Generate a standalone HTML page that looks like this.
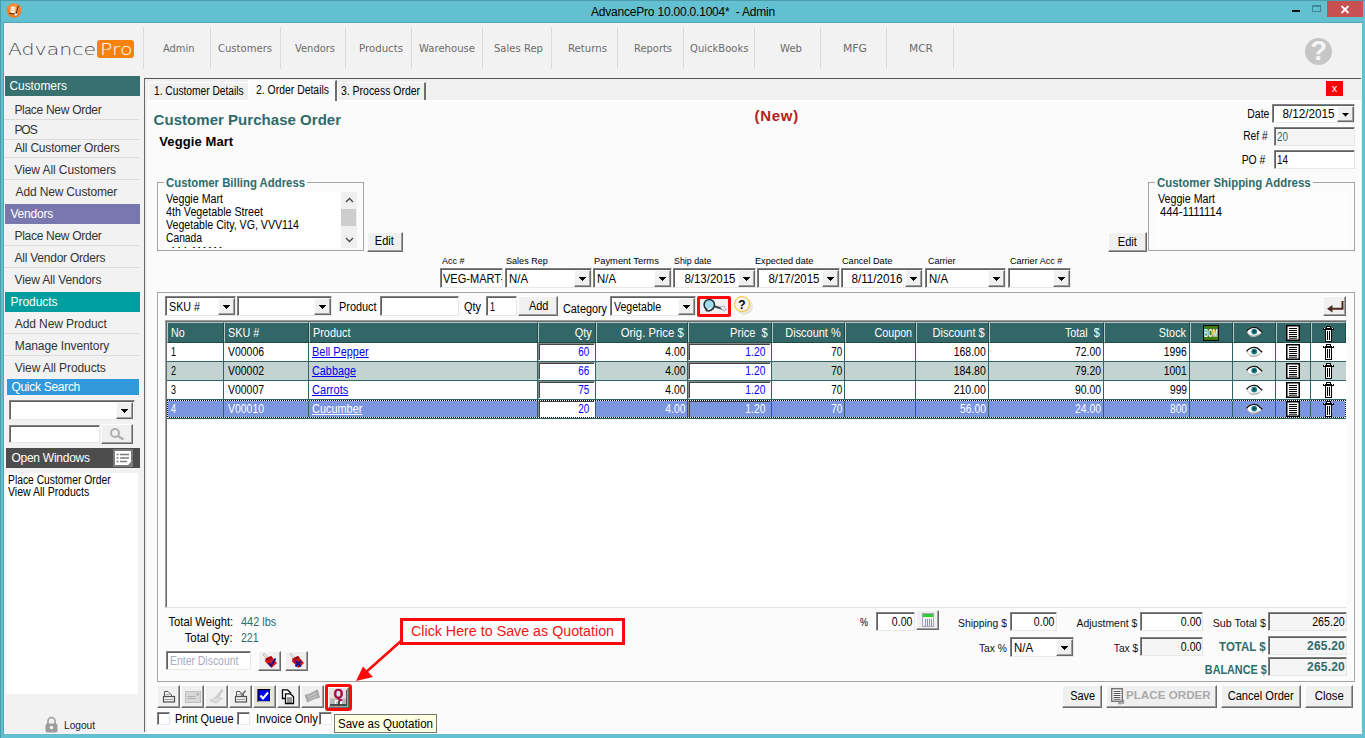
<!DOCTYPE html>
<html>
<head>
<meta charset="utf-8">
<title>AdvancePro</title>
<style>
html,body{margin:0;padding:0;}
body{width:1365px;height:738px;overflow:hidden;background:#62c0d0;font-family:"Liberation Sans",sans-serif;font-size:11px;color:#000;position:relative;}
.a{position:absolute;box-sizing:border-box;white-space:nowrap;}
.t{position:absolute;white-space:nowrap;line-height:1;}
.sunk{border:1px solid;border-color:#828282 #e8e8e8 #e8e8e8 #828282;box-shadow:inset 1px 1px 0 #5f5f5f;background:#fff;}
.dis{background:#f5f5f5;}
.btn{border:1px solid;border-color:#fdfdfd #696969 #696969 #fdfdfd;box-shadow:inset -1px -1px 0 #a0a0a0;background:#f0f0f0;}
.dd:after{content:"";position:absolute;left:50%;top:50%;width:7px;height:4px;margin:-1.5px 0 0 -3.5px;background:#000;clip-path:polygon(0 0,7px 0,7px 1px,6px 1px,6px 2px,5px 2px,5px 3px,4px 3px,4px 4px,3px 4px,3px 3px,2px 3px,2px 2px,1px 2px,1px 1px,0 1px);}
.grp{border:1px solid #a5a5a5;}
.th{background:#336666;border-left:1px solid #b4c8c8;border-top:1px solid #b4c8c8;border-right:1px solid #1f4a4a;border-bottom:1px solid #1f4a4a;}
.hl{background:#2f6464;}
.lnk{text-decoration:underline;}
</style>
</head>
<body>
<div class="a" style="left:0px;top:0px;width:1365px;height:1px;background:#4b9dac"></div>
<div class="a" style="left:0px;top:0px;width:1px;height:738px;background:#4b9dac"></div>
<div class="t" style="left:591.00px;top:6px;font-size:12px;color:#000;letter-spacing:-0.205px;">AdvancePro 10.00.0.1004*&nbsp; - Admin</div>
<svg class="a" style="left:6px;top:3px" width="16" height="16" viewBox="0 0 16 16"><defs><radialGradient id="og" cx="50%" cy="35%" r="65%"><stop offset="0" stop-color="#ff9a48"/><stop offset="1" stop-color="#f9761a"/></radialGradient></defs><circle cx="8.1" cy="7.6" r="7.4" fill="url(#og)"/><path d="M5.2 3.2 L9.6 4 L8.7 10.3 L4.3 9.5 Z" fill="#ffeedd"/><path d="M5 5.3 L9.2 6 M4.7 7.4 L8.9 8.1" stroke="#ffc89a" stroke-width=".6"/><path d="M13.2 2.8 L12 3.6 L10.1 11.2 M3.2 10.2 L10 11.4" stroke="#3a2a22" stroke-width="1" fill="none"/><circle cx="9.8" cy="11.6" r="1.35" fill="#fff" stroke="#6a7a8a" stroke-width=".4"/></svg>
<div class="a" style="left:1292px;top:10px;width:8px;height:2px;background:#111"></div>
<div class="a" style="left:1312px;top:5px;width:9px;height:7px;border:1px solid #3c8896;border-top-width:2px"></div>
<div class="a" style="left:1327px;top:1px;width:36px;height:16px;background:#c75050"></div>
<svg class="a" style="left:1340px;top:5px" width="10" height="9" viewBox="0 0 10 9"><path d="M1.5 1 L8.5 8 M8.5 1 L1.5 8" stroke="#fff" stroke-width="1.8"/></svg>
<div class="a" style="left:3px;top:22px;width:1360px;height:713px;background:#4fa6b4"></div>
<div class="a" style="left:4px;top:23px;width:1361px;height:715px;background:#62c0d0"></div>
<div class="a" style="left:4px;top:23px;width:1358px;height:711px;background:#f2f2f2"></div>
<div class="t" style="left:8.10px;top:43px;font-size:15.5px;color:#4a4a4a;font-family:'DejaVu Sans Light','DejaVu Sans',sans-serif;transform:scaleX(1.3188);transform-origin:0 0;">Advance</div>
<div class="a" style="left:97px;top:40px;width:37px;height:18px;background:#f7820d;border-radius:3px"></div>
<div class="t" style="left:99.50px;top:43px;font-size:15.5px;color:#fff;font-family:'DejaVu Sans Light','DejaVu Sans',sans-serif;transform:scaleX(1.3217);transform-origin:0 0;">Pro</div>
<div class="a" style="left:143px;top:27px;width:1px;height:42px;background:#dadada"></div>
<div class="a" style="left:209.5px;top:27px;width:1px;height:42px;background:#dadada"></div>
<div class="a" style="left:279.5px;top:27px;width:1px;height:42px;background:#dadada"></div>
<div class="a" style="left:344.5px;top:27px;width:1px;height:42px;background:#dadada"></div>
<div class="a" style="left:410.5px;top:27px;width:1px;height:42px;background:#dadada"></div>
<div class="a" style="left:482px;top:27px;width:1px;height:42px;background:#dadada"></div>
<div class="a" style="left:550.5px;top:27px;width:1px;height:42px;background:#dadada"></div>
<div class="a" style="left:617px;top:27px;width:1px;height:42px;background:#dadada"></div>
<div class="a" style="left:683.2px;top:27px;width:1px;height:42px;background:#dadada"></div>
<div class="a" style="left:754px;top:27px;width:1px;height:42px;background:#dadada"></div>
<div class="a" style="left:820px;top:27px;width:1px;height:42px;background:#dadada"></div>
<div class="a" style="left:886px;top:27px;width:1px;height:42px;background:#dadada"></div>
<div class="a" style="left:952.5px;top:27px;width:1px;height:42px;background:#dadada"></div>
<div class="t" style="left:162.50px;top:43px;font-size:10.5px;color:#6c6c6c;font-family:'DejaVu Sans',sans-serif;transform:scaleX(0.9413);transform-origin:0 0;">Admin</div>
<div class="t" style="left:218.00px;top:43px;font-size:10.5px;color:#6c6c6c;font-family:'DejaVu Sans',sans-serif;transform:scaleX(0.9562);transform-origin:0 0;">Customers</div>
<div class="t" style="left:295.00px;top:43px;font-size:10.5px;color:#6c6c6c;font-family:'DejaVu Sans',sans-serif;transform:scaleX(0.9443);transform-origin:0 0;">Vendors</div>
<div class="t" style="left:359.00px;top:43px;font-size:10.5px;color:#6c6c6c;font-family:'DejaVu Sans',sans-serif;transform:scaleX(0.9705);transform-origin:0 0;">Products</div>
<div class="t" style="left:419.00px;top:43px;font-size:10.5px;color:#6c6c6c;font-family:'DejaVu Sans',sans-serif;transform:scaleX(0.9596);transform-origin:0 0;">Warehouse</div>
<div class="t" style="left:493.50px;top:43px;font-size:10.5px;color:#6c6c6c;font-family:'DejaVu Sans',sans-serif;transform:scaleX(0.9563);transform-origin:0 0;">Sales Rep</div>
<div class="t" style="left:567.50px;top:43px;font-size:10.5px;color:#6c6c6c;font-family:'DejaVu Sans',sans-serif;transform:scaleX(0.9674);transform-origin:0 0;">Returns</div>
<div class="t" style="left:633.50px;top:43px;font-size:10.5px;color:#6c6c6c;font-family:'DejaVu Sans',sans-serif;transform:scaleX(0.9434);transform-origin:0 0;">Reports</div>
<div class="t" style="left:690.00px;top:43px;font-size:10.5px;color:#6c6c6c;font-family:'DejaVu Sans',sans-serif;transform:scaleX(0.9544);transform-origin:0 0;">QuickBooks</div>
<div class="t" style="left:779.50px;top:43px;font-size:10.5px;color:#6c6c6c;font-family:'DejaVu Sans',sans-serif;transform:scaleX(0.9610);transform-origin:0 0;">Web</div>
<div class="t" style="left:843.00px;top:43px;font-size:10.5px;color:#6c6c6c;font-family:'DejaVu Sans',sans-serif;transform:scaleX(1.0329);transform-origin:0 0;">MFG</div>
<div class="t" style="left:909.00px;top:43px;font-size:10.5px;color:#6c6c6c;font-family:'DejaVu Sans',sans-serif;transform:scaleX(1.0132);transform-origin:0 0;">MCR</div>
<div class="a" style="left:1305px;top:38px;width:27px;height:27px;background:#c6c6c6;border-radius:50%"></div>
<div class="t" style="left:1310.45px;top:38px;font-size:27px;color:#f6f6f6;font-weight:bold;">?</div>
<div class="a" style="left:5px;top:76px;width:135px;height:20px;background:#37706f"></div>
<div class="t" style="left:9.50px;top:80px;font-size:12px;color:#fff;letter-spacing:-0.079px;">Customers</div>
<div class="t" style="left:14.40px;top:104px;font-size:12px;color:#333;letter-spacing:-0.291px;">Place New Order</div>
<div class="t" style="left:14.40px;top:124px;font-size:12px;color:#333;letter-spacing:-1.048px;">POS</div>
<div class="t" style="left:14.50px;top:142px;font-size:12px;color:#333;letter-spacing:-0.194px;">All Customer Orders</div>
<div class="t" style="left:14.50px;top:164px;font-size:12px;color:#333;letter-spacing:-0.091px;">View All Customers</div>
<div class="t" style="left:15.60px;top:186px;font-size:12px;color:#333;letter-spacing:-0.158px;">Add New Customer</div>
<div class="a" style="left:4px;top:119px;width:135px;height:1px;background:#dcdcdc"></div>
<div class="a" style="left:4px;top:139px;width:135px;height:1px;background:#dcdcdc"></div>
<div class="a" style="left:4px;top:157px;width:135px;height:1px;background:#dcdcdc"></div>
<div class="a" style="left:4px;top:179px;width:135px;height:1px;background:#dcdcdc"></div>
<div class="a" style="left:5px;top:204px;width:135px;height:20px;background:#7878ae"></div>
<div class="t" style="left:10.40px;top:208px;font-size:12px;color:#fff;letter-spacing:-0.190px;">Vendors</div>
<div class="t" style="left:14.50px;top:230px;font-size:12px;color:#333;letter-spacing:-0.291px;">Place New Order</div>
<div class="t" style="left:14.50px;top:252px;font-size:12px;color:#333;letter-spacing:-0.236px;">All Vendor Orders</div>
<div class="t" style="left:14.50px;top:274px;font-size:12px;color:#333;letter-spacing:-0.148px;">View All Vendors</div>
<div class="a" style="left:4px;top:245px;width:135px;height:1px;background:#dcdcdc"></div>
<div class="a" style="left:4px;top:267px;width:135px;height:1px;background:#dcdcdc"></div>
<div class="a" style="left:5px;top:292px;width:135px;height:20px;background:#009e9e"></div>
<div class="t" style="left:10.60px;top:296px;font-size:12px;color:#fff;letter-spacing:-0.069px;">Products</div>
<div class="t" style="left:14.80px;top:318px;font-size:12px;color:#333;letter-spacing:-0.098px;">Add New Product</div>
<div class="t" style="left:14.80px;top:340px;font-size:12px;color:#333;letter-spacing:-0.103px;">Manage Inventory</div>
<div class="t" style="left:14.80px;top:362px;font-size:12px;color:#333;letter-spacing:-0.093px;">View All Products</div>
<div class="a" style="left:4px;top:333px;width:135px;height:1px;background:#dcdcdc"></div>
<div class="a" style="left:4px;top:355px;width:135px;height:1px;background:#dcdcdc"></div>
<div class="a" style="left:7px;top:379px;width:132px;height:16px;background:#3399dd"></div>
<div class="t" style="left:11.40px;top:381px;font-size:12px;color:#fff;letter-spacing:-0.286px;">Quick Search</div>
<div class="a sunk" style="left:9px;top:400px;width:126px;height:20px;"></div>
<div class="a btn dd" style="left:116px;top:402px;width:17px;height:17px;"></div>
<div class="a sunk" style="left:9px;top:424.5px;width:91px;height:18.5px;"></div>
<div class="a btn" style="left:101px;top:424px;width:31.5px;height:19.5px;"></div>
<svg class="a" style="left:108px;top:427px" width="18" height="14" viewBox="0 0 18 14"><circle cx="7" cy="6" r="4" fill="none" stroke="#b0b0b0" stroke-width="2"/><path d="M10 9 L15.5 12.5" stroke="#b0b0b0" stroke-width="2.4"/></svg>
<div class="a" style="left:6px;top:448px;width:134px;height:20px;background:#4d4d4d"></div>
<div class="t" style="left:11.40px;top:452px;font-size:12px;color:#fff;letter-spacing:-0.247px;">Open Windows</div>
<div class="a" style="left:113px;top:449px;width:20px;height:18px;background:#7b7b7b"></div>
<svg class="a" style="left:115px;top:451px" width="16" height="14" viewBox="0 0 16 14"><path d="M0 0 H16 V11 L13 14 H0 Z" fill="#fff"/><path d="M1.5 3.5 h2 M5 3.5 h9 M1.5 7 h2 M5 7 h9 M1.5 10.5 h2 M5 10.5 h7" stroke="#7b7b7b" stroke-width="1.4"/></svg>
<div class="a" style="left:6px;top:473px;width:132px;height:221px;background:#fff"></div>
<div class="t" style="left:8.00px;top:474px;font-size:12px;color:#000;transform:scaleX(0.8595);transform-origin:0 0;">Place Customer Order</div>
<div class="t" style="left:8.00px;top:486px;font-size:12px;color:#000;transform:scaleX(0.8780);transform-origin:0 0;">View All Products</div>
<svg class="a" style="left:45px;top:716px" width="13" height="17" viewBox="0 0 13 17"><path d="M3 8 V5 a3.5 3.5 0 0 1 7 0 V8" fill="none" stroke="#9c9c9c" stroke-width="1.6"/><rect x="0.5" y="7.5" width="12" height="9" rx="2" fill="#9c9c9c"/><circle cx="6.5" cy="11.5" r="1.8" fill="#f2f2f2"/></svg>
<div class="t" style="left:63.50px;top:720px;font-size:11px;color:#222;transform:scaleX(0.9245);transform-origin:0 0;">Logout</div>
<div class="a" style="left:144px;top:78px;width:1217px;height:654px;background:#f0f0f0;border-top:1px solid #555;border-left:1px solid #6b6b6b"></div>
<div class="a" style="left:147px;top:100px;width:1214px;height:632px;background:#fbfbfb;border-top:1px solid #fff;border-left:1px solid #fff"></div>
<div class="a" style="left:144px;top:732px;width:1218px;height:2px;background:#fafafa"></div>
<div class="a" style="left:146px;top:80px;width:1214px;height:20px;background:#f0f0f0"></div>
<div class="a" style="left:148px;top:82px;width:101px;height:18px;background:#f0f0f0;border:1px solid #fff;border-right:0;border-bottom:0"></div>
<div class="a" style="left:337px;top:82px;width:89px;height:18px;background:#f0f0f0;border:1px solid #fff;border-right:2px solid #6d6d6d;border-bottom:0"></div>
<div class="a" style="left:248px;top:80px;width:89px;height:21px;background:#fbfbfb;border:1px solid #fff;border-right:2px solid #6d6d6d;border-bottom:0"></div>
<div class="t" style="left:153.60px;top:85px;font-size:12px;color:#000;transform:scaleX(0.8513);transform-origin:0 0;">1. Customer Details</div>
<div class="t" style="left:255.50px;top:84px;font-size:12px;color:#000;transform:scaleX(0.8688);transform-origin:0 0;">2. Order Details</div>
<div class="t" style="left:341.00px;top:85px;font-size:12px;color:#000;transform:scaleX(0.8711);transform-origin:0 0;">3. Process Order</div>
<div class="a" style="left:1326px;top:81px;width:17px;height:15px;background:#ff0000"></div>
<div class="t" style="left:1331.75px;top:83px;font-size:11px;color:#fff;">x</div>
<div class="t" style="left:153.60px;top:112px;font-size:15px;color:#2f6b6b;font-weight:bold;letter-spacing:0.034px;">Customer Purchase Order</div>
<div class="t" style="left:159.30px;top:135px;font-size:13px;color:#000;font-weight:bold;letter-spacing:0.094px;">Veggie Mart</div>
<div class="t" style="left:754.50px;top:108px;font-size:15px;color:#b22222;font-weight:bold;letter-spacing:0.734px;">(New)</div>
<div class="t" style="left:1244.15px;top:108px;font-size:12px;color:#000;transform:scaleX(0.8680);transform-origin:100% 0;">Date</div>
<div class="a sunk" style="left:1272px;top:104px;width:83px;height:19px;"></div>
<div class="t" style="left:1280.62px;top:108px;font-size:12px;color:#000;transform:scaleX(0.9742);transform-origin:100% 0;">8/12/2015</div>
<div class="a btn dd" style="left:1337px;top:106px;width:17px;height:16px;"></div>
<div class="t" style="left:1239.32px;top:130px;font-size:12px;color:#000;transform:scaleX(0.8543);transform-origin:100% 0;">Ref #</div>
<div class="a sunk dis" style="left:1274px;top:127px;width:81px;height:19px;"></div>
<div class="t" style="left:1277.00px;top:131px;font-size:12px;color:#2f6b6b;transform:scaleX(0.8242);transform-origin:0 0;">20</div>
<div class="t" style="left:1237.65px;top:154px;font-size:12px;color:#000;transform:scaleX(0.8667);transform-origin:100% 0;">PO #</div>
<div class="a sunk" style="left:1274px;top:150px;width:81px;height:19px;"></div>
<div class="t" style="left:1277.00px;top:154px;font-size:12px;color:#000;transform:scaleX(0.8242);transform-origin:0 0;">14</div>
<div class="a grp" style="left:157px;top:182px;width:207px;height:69px;"></div>
<div class="a" style="left:164px;top:178px;width:143px;height:14px;background:#fbfbfb"></div>
<div class="t" style="left:165.80px;top:177px;font-size:12px;color:#2f6b6b;font-weight:bold;transform:scaleX(0.9462);transform-origin:0 0;">Customer Billing Address</div>
<div class="a" style="left:165px;top:192px;width:192px;height:56px;background:#fff"></div>
<div class="t" style="left:166.00px;top:193px;font-size:12px;color:#000;transform:scaleX(0.8902);transform-origin:0 0;">Veggie Mart</div>
<div class="t" style="left:166.00px;top:206px;font-size:12px;color:#000;transform:scaleX(0.8920);transform-origin:0 0;">4th Vegetable Street</div>
<div class="t" style="left:166.00px;top:219px;font-size:12px;color:#000;transform:scaleX(0.8849);transform-origin:0 0;">Vegetable City, VG, VVV114</div>
<div class="t" style="left:166.00px;top:232px;font-size:12px;color:#000;transform:scaleX(0.8565);transform-origin:0 0;">Canada</div>
<div class="a" style="left:341px;top:192px;width:16px;height:56px;background:#f0f0f0"></div>
<div class="a" style="left:341px;top:209px;width:15px;height:17px;background:#cdcdcd"></div>
<svg class="a" style="left:345px;top:197px" width="9" height="6" viewBox="0 0 9 6"><path d="M1 5 L4.5 1.5 L8 5" fill="none" stroke="#444" stroke-width="1.3"/></svg>
<svg class="a" style="left:345px;top:237px" width="9" height="6" viewBox="0 0 9 6"><path d="M1 1 L4.5 4.5 L8 1" fill="none" stroke="#444" stroke-width="1.3"/></svg>
<div class="a" style="left:166px;top:246px;width:60px;height:2px;overflow:hidden"><div class="t" style="left:3px;top:0px;font-size:11px">444-1111114</div></div>
<div class="a btn" style="left:367px;top:232px;width:36px;height:20px;"></div>
<div class="t" style="left:374.16px;top:235px;font-size:12px;color:#000;transform:scaleX(0.9189);transform-origin:50% 0;">Edit</div>
<div class="a grp" style="left:1148px;top:182px;width:207px;height:69px;"></div>
<div class="a" style="left:1155px;top:178px;width:158px;height:14px;background:#fbfbfb"></div>
<div class="t" style="left:1157.00px;top:177px;font-size:12px;color:#2f6b6b;font-weight:bold;transform:scaleX(0.9507);transform-origin:0 0;">Customer Shipping Address</div>
<div class="a" style="left:1156px;top:191.5px;width:192px;height:56.5px;background:#fdfdfd"></div>
<div class="t" style="left:1157.50px;top:193px;font-size:12px;color:#000;transform:scaleX(0.8902);transform-origin:0 0;">Veggie Mart</div>
<div class="t" style="left:1160.40px;top:206px;font-size:12px;color:#000;transform:scaleX(0.9355);transform-origin:0 0;">444-1111114</div>
<div class="a btn" style="left:1108px;top:232px;width:39px;height:20px;"></div>
<div class="t" style="left:1117.16px;top:236px;font-size:12px;color:#000;transform:scaleX(0.9189);transform-origin:50% 0;">Edit</div>
<div class="t" style="left:442.00px;top:257px;font-size:9px;color:#000;transform:scaleX(0.9952);transform-origin:0 0;">Acc #</div>
<div class="t" style="left:506.00px;top:257px;font-size:9px;color:#000;transform:scaleX(1.0067);transform-origin:0 0;">Sales Rep</div>
<div class="t" style="left:594.40px;top:257px;font-size:9px;color:#000;transform:scaleX(1.0393);transform-origin:0 0;">Payment Terms</div>
<div class="t" style="left:674.00px;top:257px;font-size:9px;color:#000;transform:scaleX(0.9835);transform-origin:0 0;">Ship date</div>
<div class="t" style="left:754.50px;top:257px;font-size:9px;color:#000;transform:scaleX(1.0132);transform-origin:0 0;">Expected date</div>
<div class="t" style="left:842.20px;top:257px;font-size:9px;color:#000;transform:scaleX(1.0157);transform-origin:0 0;">Cancel Date</div>
<div class="t" style="left:928.00px;top:257px;font-size:9px;color:#000;transform:scaleX(1.0037);transform-origin:0 0;">Carrier</div>
<div class="t" style="left:1010.30px;top:257px;font-size:9px;color:#000;transform:scaleX(1.0055);transform-origin:0 0;">Carrier Acc #</div>
<div class="a sunk" style="left:440px;top:268px;width:63px;height:20px;"></div>
<div class="a" style="left:442px;top:270px;width:60px;height:16px;overflow:hidden"><div class="t" style="left:1px;top:3px;font-size:12px;transform:scaleX(0.92);transform-origin:0 0">VEG-MART-</div></div>
<div class="a sunk" style="left:505px;top:268px;width:87px;height:20px;"></div>
<div class="a btn dd" style="left:574px;top:270px;width:17px;height:17px;"></div>
<div class="t" style="left:509.40px;top:273px;font-size:12px;color:#000;transform:scaleX(0.9498);transform-origin:0 0;">N/A</div>
<div class="a sunk" style="left:593px;top:268px;width:79px;height:20px;"></div>
<div class="a btn dd" style="left:654px;top:270px;width:17px;height:17px;"></div>
<div class="t" style="left:597.40px;top:273px;font-size:12px;color:#000;transform:scaleX(0.9498);transform-origin:0 0;">N/A</div>
<div class="a sunk" style="left:673px;top:268px;width:83px;height:20px;"></div>
<div class="a btn dd" style="left:738px;top:270px;width:17px;height:17px;"></div>
<div class="t" style="left:681.62px;top:273px;font-size:12px;color:#000;transform:scaleX(0.9554);transform-origin:100% 0;">8/13/2015</div>
<div class="a sunk" style="left:757px;top:268px;width:83px;height:20px;"></div>
<div class="a btn dd" style="left:822px;top:270px;width:17px;height:17px;"></div>
<div class="t" style="left:765.62px;top:273px;font-size:12px;color:#000;transform:scaleX(0.9554);transform-origin:100% 0;">8/17/2015</div>
<div class="a sunk" style="left:841px;top:268px;width:82px;height:20px;"></div>
<div class="a btn dd" style="left:905px;top:270px;width:17px;height:17px;"></div>
<div class="t" style="left:849.51px;top:273px;font-size:12px;color:#000;transform:scaleX(0.9716);transform-origin:100% 0;">8/11/2016</div>
<div class="a sunk" style="left:925px;top:268px;width:81px;height:20px;"></div>
<div class="a btn dd" style="left:988px;top:270px;width:17px;height:17px;"></div>
<div class="t" style="left:929.40px;top:273px;font-size:12px;color:#000;transform:scaleX(0.9498);transform-origin:0 0;">N/A</div>
<div class="a sunk" style="left:1008px;top:268px;width:63px;height:20px;"></div>
<div class="a btn dd" style="left:1053px;top:270px;width:17px;height:17px;"></div>
<div class="a grp" style="left:157px;top:292px;width:1198px;height:390px;"></div>
<div class="a sunk" style="left:165px;top:296px;width:71px;height:20px;"></div>
<div class="a btn dd" style="left:218px;top:298px;width:17px;height:17px;"></div>
<div class="t" style="left:169.40px;top:301px;font-size:12px;color:#000;transform:scaleX(0.8938);transform-origin:0 0;">SKU #</div>
<div class="a sunk" style="left:237px;top:296px;width:95px;height:20px;"></div>
<div class="a btn dd" style="left:314px;top:298px;width:17px;height:17px;"></div>
<div class="t" style="left:338.50px;top:301px;font-size:12px;color:#000;transform:scaleX(0.9068);transform-origin:0 0;">Product</div>
<div class="a sunk" style="left:380px;top:296px;width:79px;height:20px;"></div>
<div class="t" style="left:464.00px;top:301px;font-size:12px;color:#000;transform:scaleX(0.9107);transform-origin:0 0;">Qty</div>
<div class="a sunk" style="left:486px;top:296px;width:31px;height:20px;"></div>
<div class="t" style="left:489.50px;top:301px;font-size:12px;color:#000;transform:scaleX(0.7493);transform-origin:0 0;">1</div>
<div class="a btn" style="left:518px;top:296px;width:40px;height:20px;"></div>
<div class="t" style="left:527.62px;top:300px;font-size:12px;color:#000;transform:scaleX(0.9133);transform-origin:50% 0;">Add</div>
<div class="t" style="left:563.10px;top:303px;font-size:12px;color:#000;transform:scaleX(0.9037);transform-origin:0 0;">Category</div>
<div class="a sunk" style="left:610px;top:296px;width:86px;height:20px;"></div>
<div class="a btn dd" style="left:678px;top:298px;width:17px;height:17px;"></div>
<div class="t" style="left:614.40px;top:301px;font-size:12px;color:#000;transform:scaleX(0.8805);transform-origin:0 0;">Vegetable</div>
<div class="a" style="left:697px;top:296px;width:34px;height:21px;border:3px solid #fa0a0a;border-radius:2px;background:#f0f0f0"></div>
<svg class="a" style="left:700px;top:298px" width="28" height="16" viewBox="0 0 28 16"><path d="M13.5 8 L24.5 11.5" stroke="#3a4a52" stroke-width="2.2"/><path d="M20 9 L24 8 L26 12 L23 12.5 Z" fill="#f4f4f4" stroke="#8a9aa0" stroke-width=".7"/><ellipse cx="9.3" cy="6.8" rx="5.2" ry="5.4" fill="#9fdcec" stroke="#1f2a33" stroke-width="1.5"/><path d="M7 12.5 L11.5 10" stroke="#fff" stroke-width="1.4"/><path d="M5.5 12 C8 14 11 13 13 10.5" fill="none" stroke="#1f2a33" stroke-width="1.2"/></svg>
<div class="a" style="left:736px;top:298px;width:17px;height:17px;border-radius:50%;background:#e9e5d8"></div>
<div class="a" style="left:734px;top:296px;width:16px;height:16px;border-radius:50%;background:#f5f3ec;border:1.5px solid #efc11e"></div>
<div class="t" style="left:738.34px;top:299px;font-size:12px;color:#000;font-weight:bold;">?</div>
<div class="a btn" style="left:1323px;top:296px;width:23px;height:20px;"></div>
<svg class="a" style="left:1326px;top:299px" width="19" height="15" viewBox="0 0 19 15"><path d="M16.5 2 V9.8 H5" fill="none" stroke="#4a2a20" stroke-width="2"/><path d="M1 9.8 L6.5 6 V13.6 Z" fill="#4a2a20"/></svg>
<div class="a" style="left:165px;top:320px;width:1182px;height:288px;background:#fff;border:1px solid #a0a0a0;border-right-color:#fff;border-bottom-color:#e3e3e3;box-shadow:inset 1px 1px 0 #696969"></div>
<div class="a th" style="left:167px;top:322px;width:57px;height:21px;"></div>
<div class="t" style="left:171.30px;top:327px;font-size:12px;color:#fff;transform:scaleX(0.8931);transform-origin:0 0;">No</div>
<div class="a th" style="left:224px;top:322px;width:85px;height:21px;"></div>
<div class="t" style="left:228.30px;top:327px;font-size:12px;color:#fff;transform:scaleX(0.9025);transform-origin:0 0;">SKU #</div>
<div class="a th" style="left:309px;top:322px;width:229px;height:21px;"></div>
<div class="t" style="left:313.30px;top:327px;font-size:12px;color:#fff;transform:scaleX(0.9044);transform-origin:0 0;">Product</div>
<div class="a th" style="left:538px;top:322px;width:58px;height:21px;"></div>
<div class="t" style="left:573.33px;top:327px;font-size:12px;color:#fff;transform:scaleX(0.9107);transform-origin:100% 0;">Qty</div>
<div class="a th" style="left:596px;top:322px;width:92px;height:21px;"></div>
<div class="t" style="left:617.32px;top:327px;font-size:12px;color:#fff;transform:scaleX(0.9433);transform-origin:100% 0;">Orig. Price $</div>
<div class="a th" style="left:688px;top:322px;width:84px;height:21px;"></div>
<div class="t" style="left:727.32px;top:327px;font-size:12px;color:#fff;transform:scaleX(0.9243);transform-origin:100% 0;">Price&nbsp; $</div>
<div class="a th" style="left:772px;top:322px;width:73px;height:21px;"></div>
<div class="t" style="left:780.31px;top:327px;font-size:12px;color:#fff;transform:scaleX(0.9128);transform-origin:100% 0;">Discount %</div>
<div class="a th" style="left:845px;top:322px;width:71px;height:21px;"></div>
<div class="t" style="left:869.97px;top:327px;font-size:12px;color:#fff;transform:scaleX(0.8922);transform-origin:100% 0;">Coupon</div>
<div class="a th" style="left:916px;top:322px;width:73px;height:21px;"></div>
<div class="t" style="left:928.31px;top:327px;font-size:12px;color:#fff;transform:scaleX(0.9208);transform-origin:100% 0;">Discount $</div>
<div class="a th" style="left:989px;top:322px;width:115px;height:21px;"></div>
<div class="t" style="left:1061.31px;top:327px;font-size:12px;color:#fff;transform:scaleX(0.8995);transform-origin:100% 0;">Total&nbsp; $</div>
<div class="a th" style="left:1104px;top:322px;width:86px;height:21px;"></div>
<div class="t" style="left:1155.99px;top:327px;font-size:12px;color:#fff;transform:scaleX(0.9063);transform-origin:100% 0;">Stock</div>
<div class="a th" style="left:1190px;top:322px;width:43px;height:21px;"></div>
<div class="a th" style="left:1233px;top:322px;width:43px;height:21px;"></div>
<div class="a th" style="left:1276px;top:322px;width:35px;height:21px;"></div>
<div class="a th" style="left:1311px;top:322px;width:35px;height:21px;"></div>
<div class="a" style="left:167px;top:343px;width:1179px;height:18px;background:#fff"></div>
<div class="t" style="left:171.30px;top:346px;font-size:12px;color:#000;transform:scaleX(0.7493);transform-origin:0 0;">1</div>
<div class="t" style="left:228.30px;top:346px;font-size:12px;color:#000;transform:scaleX(0.8702);transform-origin:0 0;">V00006</div>
<div class="t lnk" style="left:312.40px;top:346px;font-size:12px;color:#0000ee;transform:scaleX(0.9140);transform-origin:0 0;">Bell Pepper</div>
<div class="a" style="left:538px;top:343px;width:57px;height:18px;background:#fff;border:1px solid;border-color:#8a8a8a #fff #fff #8a8a8a;box-shadow:inset 1px 1px 0 #444"></div>
<div class="t" style="left:575.65px;top:346px;font-size:12px;color:#0000ff;transform:scaleX(0.8242);transform-origin:100% 0;">60</div>
<div class="t" style="left:661.65px;top:346px;font-size:12px;color:#000;transform:scaleX(0.8564);transform-origin:100% 0;">4.00</div>
<div class="a" style="left:688px;top:343px;width:83px;height:18px;background:#fff;border:1px solid;border-color:#8a8a8a #fff #fff #8a8a8a;box-shadow:inset 1px 1px 0 #444"></div>
<div class="t" style="left:741.65px;top:346px;font-size:12px;color:#0000ff;transform:scaleX(0.8564);transform-origin:100% 0;">1.20</div>
<div class="t" style="left:828.65px;top:346px;font-size:12px;color:#000;transform:scaleX(0.8242);transform-origin:100% 0;">70</div>
<div class="t" style="left:949.30px;top:346px;font-size:12px;color:#000;transform:scaleX(0.8719);transform-origin:100% 0;">168.00</div>
<div class="t" style="left:1070.97px;top:346px;font-size:12px;color:#000;transform:scaleX(0.8659);transform-origin:100% 0;">72.00</div>
<div class="t" style="left:1160.31px;top:346px;font-size:12px;color:#000;transform:scaleX(0.8617);transform-origin:100% 0;">1996</div>
<div class="a hl" style="left:223px;top:343px;width:1px;height:18px;"></div>
<div class="a hl" style="left:308px;top:343px;width:1px;height:18px;"></div>
<div class="a hl" style="left:537px;top:343px;width:1px;height:18px;"></div>
<div class="a hl" style="left:595px;top:343px;width:1px;height:18px;"></div>
<div class="a hl" style="left:687px;top:343px;width:1px;height:18px;"></div>
<div class="a hl" style="left:771px;top:343px;width:1px;height:18px;"></div>
<div class="a hl" style="left:844px;top:343px;width:1px;height:18px;"></div>
<div class="a hl" style="left:915px;top:343px;width:1px;height:18px;"></div>
<div class="a hl" style="left:988px;top:343px;width:1px;height:18px;"></div>
<div class="a hl" style="left:1103px;top:343px;width:1px;height:18px;"></div>
<div class="a hl" style="left:1189px;top:343px;width:1px;height:18px;"></div>
<div class="a hl" style="left:1232px;top:343px;width:1px;height:18px;"></div>
<div class="a hl" style="left:1275px;top:343px;width:1px;height:18px;"></div>
<div class="a hl" style="left:1310px;top:343px;width:1px;height:18px;"></div>
<div class="a hl" style="left:167px;top:361px;width:1179px;height:1px;"></div>
<svg class="a" style="left:1245.5px;top:346px" width="17" height="12" viewBox="0 0 17 12"><path d="M0.8 5.2 C3 1.8 7.5 0.6 11 1.6 L16 5.8 C14.5 8.5 10.5 11 6.5 10.8 C4 10.3 2 8 0.8 5.2 Z" fill="#fff" stroke="#b4b4b4" stroke-width=".7"/><circle cx="8.2" cy="5.6" r="2.9" fill="#16808a"/><circle cx="8.2" cy="5.4" r="1.2" fill="#06303a"/><path d="M0.6 5.4 C3 2 7.5 0.8 11 1.8 L16.2 6.2" fill="none" stroke="#111" stroke-width="1.4"/><path d="M3.5 8.8 C6 10.6 10.5 10.4 13.5 8" fill="none" stroke="#888" stroke-width=".7"/></svg>
<svg class="a" style="left:1286px;top:344px" width="14" height="16" viewBox="0 0 14 16"><rect x=".75" y=".75" width="12.5" height="14.5" fill="#fff" stroke="#000" stroke-width="1.5"/><path d="M3 3.5 h8 M3 5.5 h8 M3 7.5 h8 M3 9.5 h8 M3 11.5 h8 M3 13.2 h8" stroke="#000" stroke-width="1"/></svg>
<svg class="a" style="left:1323px;top:344px" width="11" height="16" viewBox="0 0 11 16" shape-rendering="crispEdges"><rect x="3" y="0" width="5" height="2" fill="#000"/><rect x="4" y="1" width="3" height="1" fill="#fff"/><rect x="0" y="2" width="11" height="2" fill="#000"/><rect x="1" y="2" width="1" height="1" fill="#fff"/><rect x="9" y="2" width="1" height="1" fill="#fff"/><rect x="2" y="4" width="7" height="12" fill="#000"/><rect x="3" y="4" width="1" height="11" fill="#fff"/><rect x="5" y="4" width="1" height="11" fill="#fff"/><rect x="7" y="4" width="1" height="11" fill="#fff"/><rect x="3" y="4" width="5" height="1" fill="#fff"/><rect x="3" y="14" width="5" height="1" fill="#fff"/></svg>
<div class="a" style="left:167px;top:362px;width:1179px;height:18px;background:#c3d3d1"></div>
<div class="t" style="left:171.30px;top:365px;font-size:12px;color:#000;transform:scaleX(0.7493);transform-origin:0 0;">2</div>
<div class="t" style="left:228.30px;top:365px;font-size:12px;color:#000;transform:scaleX(0.8702);transform-origin:0 0;">V00002</div>
<div class="t lnk" style="left:312.40px;top:365px;font-size:12px;color:#0000ee;transform:scaleX(0.9034);transform-origin:0 0;">Cabbage</div>
<div class="a" style="left:538px;top:362px;width:57px;height:18px;background:#fff;border:1px solid;border-color:#8a8a8a #fff #fff #8a8a8a;box-shadow:inset 1px 1px 0 #444"></div>
<div class="t" style="left:575.65px;top:365px;font-size:12px;color:#0000ff;transform:scaleX(0.8242);transform-origin:100% 0;">66</div>
<div class="t" style="left:661.65px;top:365px;font-size:12px;color:#000;transform:scaleX(0.8564);transform-origin:100% 0;">4.00</div>
<div class="a" style="left:688px;top:362px;width:83px;height:18px;background:#fff;border:1px solid;border-color:#8a8a8a #fff #fff #8a8a8a;box-shadow:inset 1px 1px 0 #444"></div>
<div class="t" style="left:741.65px;top:365px;font-size:12px;color:#0000ff;transform:scaleX(0.8564);transform-origin:100% 0;">1.20</div>
<div class="t" style="left:828.65px;top:365px;font-size:12px;color:#000;transform:scaleX(0.8242);transform-origin:100% 0;">70</div>
<div class="t" style="left:949.30px;top:365px;font-size:12px;color:#000;transform:scaleX(0.8719);transform-origin:100% 0;">184.80</div>
<div class="t" style="left:1070.97px;top:365px;font-size:12px;color:#000;transform:scaleX(0.8659);transform-origin:100% 0;">79.20</div>
<div class="t" style="left:1160.31px;top:365px;font-size:12px;color:#000;transform:scaleX(0.8617);transform-origin:100% 0;">1001</div>
<div class="a hl" style="left:223px;top:362px;width:1px;height:18px;"></div>
<div class="a hl" style="left:308px;top:362px;width:1px;height:18px;"></div>
<div class="a hl" style="left:537px;top:362px;width:1px;height:18px;"></div>
<div class="a hl" style="left:595px;top:362px;width:1px;height:18px;"></div>
<div class="a hl" style="left:687px;top:362px;width:1px;height:18px;"></div>
<div class="a hl" style="left:771px;top:362px;width:1px;height:18px;"></div>
<div class="a hl" style="left:844px;top:362px;width:1px;height:18px;"></div>
<div class="a hl" style="left:915px;top:362px;width:1px;height:18px;"></div>
<div class="a hl" style="left:988px;top:362px;width:1px;height:18px;"></div>
<div class="a hl" style="left:1103px;top:362px;width:1px;height:18px;"></div>
<div class="a hl" style="left:1189px;top:362px;width:1px;height:18px;"></div>
<div class="a hl" style="left:1232px;top:362px;width:1px;height:18px;"></div>
<div class="a hl" style="left:1275px;top:362px;width:1px;height:18px;"></div>
<div class="a hl" style="left:1310px;top:362px;width:1px;height:18px;"></div>
<div class="a hl" style="left:167px;top:380px;width:1179px;height:1px;"></div>
<svg class="a" style="left:1245.5px;top:365px" width="17" height="12" viewBox="0 0 17 12"><path d="M0.8 5.2 C3 1.8 7.5 0.6 11 1.6 L16 5.8 C14.5 8.5 10.5 11 6.5 10.8 C4 10.3 2 8 0.8 5.2 Z" fill="#fff" stroke="#b4b4b4" stroke-width=".7"/><circle cx="8.2" cy="5.6" r="2.9" fill="#16808a"/><circle cx="8.2" cy="5.4" r="1.2" fill="#06303a"/><path d="M0.6 5.4 C3 2 7.5 0.8 11 1.8 L16.2 6.2" fill="none" stroke="#111" stroke-width="1.4"/><path d="M3.5 8.8 C6 10.6 10.5 10.4 13.5 8" fill="none" stroke="#888" stroke-width=".7"/></svg>
<svg class="a" style="left:1286px;top:363px" width="14" height="16" viewBox="0 0 14 16"><rect x=".75" y=".75" width="12.5" height="14.5" fill="#fff" stroke="#000" stroke-width="1.5"/><path d="M3 3.5 h8 M3 5.5 h8 M3 7.5 h8 M3 9.5 h8 M3 11.5 h8 M3 13.2 h8" stroke="#000" stroke-width="1"/></svg>
<svg class="a" style="left:1323px;top:363px" width="11" height="16" viewBox="0 0 11 16" shape-rendering="crispEdges"><rect x="3" y="0" width="5" height="2" fill="#000"/><rect x="4" y="1" width="3" height="1" fill="#fff"/><rect x="0" y="2" width="11" height="2" fill="#000"/><rect x="1" y="2" width="1" height="1" fill="#fff"/><rect x="9" y="2" width="1" height="1" fill="#fff"/><rect x="2" y="4" width="7" height="12" fill="#000"/><rect x="3" y="4" width="1" height="11" fill="#fff"/><rect x="5" y="4" width="1" height="11" fill="#fff"/><rect x="7" y="4" width="1" height="11" fill="#fff"/><rect x="3" y="4" width="5" height="1" fill="#fff"/><rect x="3" y="14" width="5" height="1" fill="#fff"/></svg>
<div class="a" style="left:167px;top:381px;width:1179px;height:18px;background:#fff"></div>
<div class="t" style="left:171.30px;top:384px;font-size:12px;color:#000;transform:scaleX(0.7493);transform-origin:0 0;">3</div>
<div class="t" style="left:228.30px;top:384px;font-size:12px;color:#000;transform:scaleX(0.8702);transform-origin:0 0;">V00007</div>
<div class="t lnk" style="left:312.40px;top:384px;font-size:12px;color:#0000ee;transform:scaleX(0.9228);transform-origin:0 0;">Carrots</div>
<div class="a" style="left:538px;top:381px;width:57px;height:18px;background:#fff;border:1px solid;border-color:#8a8a8a #fff #fff #8a8a8a;box-shadow:inset 1px 1px 0 #444"></div>
<div class="t" style="left:575.65px;top:384px;font-size:12px;color:#0000ff;transform:scaleX(0.8242);transform-origin:100% 0;">75</div>
<div class="t" style="left:661.65px;top:384px;font-size:12px;color:#000;transform:scaleX(0.8564);transform-origin:100% 0;">4.00</div>
<div class="a" style="left:688px;top:381px;width:83px;height:18px;background:#fff;border:1px solid;border-color:#8a8a8a #fff #fff #8a8a8a;box-shadow:inset 1px 1px 0 #444"></div>
<div class="t" style="left:741.65px;top:384px;font-size:12px;color:#0000ff;transform:scaleX(0.8564);transform-origin:100% 0;">1.20</div>
<div class="t" style="left:828.65px;top:384px;font-size:12px;color:#000;transform:scaleX(0.8242);transform-origin:100% 0;">70</div>
<div class="t" style="left:949.30px;top:384px;font-size:12px;color:#000;transform:scaleX(0.8719);transform-origin:100% 0;">210.00</div>
<div class="t" style="left:1070.97px;top:384px;font-size:12px;color:#000;transform:scaleX(0.8659);transform-origin:100% 0;">90.00</div>
<div class="t" style="left:1166.98px;top:384px;font-size:12px;color:#000;transform:scaleX(0.8492);transform-origin:100% 0;">999</div>
<div class="a hl" style="left:223px;top:381px;width:1px;height:18px;"></div>
<div class="a hl" style="left:308px;top:381px;width:1px;height:18px;"></div>
<div class="a hl" style="left:537px;top:381px;width:1px;height:18px;"></div>
<div class="a hl" style="left:595px;top:381px;width:1px;height:18px;"></div>
<div class="a hl" style="left:687px;top:381px;width:1px;height:18px;"></div>
<div class="a hl" style="left:771px;top:381px;width:1px;height:18px;"></div>
<div class="a hl" style="left:844px;top:381px;width:1px;height:18px;"></div>
<div class="a hl" style="left:915px;top:381px;width:1px;height:18px;"></div>
<div class="a hl" style="left:988px;top:381px;width:1px;height:18px;"></div>
<div class="a hl" style="left:1103px;top:381px;width:1px;height:18px;"></div>
<div class="a hl" style="left:1189px;top:381px;width:1px;height:18px;"></div>
<div class="a hl" style="left:1232px;top:381px;width:1px;height:18px;"></div>
<div class="a hl" style="left:1275px;top:381px;width:1px;height:18px;"></div>
<div class="a hl" style="left:1310px;top:381px;width:1px;height:18px;"></div>
<div class="a hl" style="left:167px;top:399px;width:1179px;height:1px;"></div>
<svg class="a" style="left:1245.5px;top:384px" width="17" height="12" viewBox="0 0 17 12"><path d="M0.8 5.2 C3 1.8 7.5 0.6 11 1.6 L16 5.8 C14.5 8.5 10.5 11 6.5 10.8 C4 10.3 2 8 0.8 5.2 Z" fill="#fff" stroke="#b4b4b4" stroke-width=".7"/><circle cx="8.2" cy="5.6" r="2.9" fill="#16808a"/><circle cx="8.2" cy="5.4" r="1.2" fill="#06303a"/><path d="M0.6 5.4 C3 2 7.5 0.8 11 1.8 L16.2 6.2" fill="none" stroke="#111" stroke-width="1.4"/><path d="M3.5 8.8 C6 10.6 10.5 10.4 13.5 8" fill="none" stroke="#888" stroke-width=".7"/></svg>
<svg class="a" style="left:1286px;top:382px" width="14" height="16" viewBox="0 0 14 16"><rect x=".75" y=".75" width="12.5" height="14.5" fill="#fff" stroke="#000" stroke-width="1.5"/><path d="M3 3.5 h8 M3 5.5 h8 M3 7.5 h8 M3 9.5 h8 M3 11.5 h8 M3 13.2 h8" stroke="#000" stroke-width="1"/></svg>
<svg class="a" style="left:1323px;top:382px" width="11" height="16" viewBox="0 0 11 16" shape-rendering="crispEdges"><rect x="3" y="0" width="5" height="2" fill="#000"/><rect x="4" y="1" width="3" height="1" fill="#fff"/><rect x="0" y="2" width="11" height="2" fill="#000"/><rect x="1" y="2" width="1" height="1" fill="#fff"/><rect x="9" y="2" width="1" height="1" fill="#fff"/><rect x="2" y="4" width="7" height="12" fill="#000"/><rect x="3" y="4" width="1" height="11" fill="#fff"/><rect x="5" y="4" width="1" height="11" fill="#fff"/><rect x="7" y="4" width="1" height="11" fill="#fff"/><rect x="3" y="4" width="5" height="1" fill="#fff"/><rect x="3" y="14" width="5" height="1" fill="#fff"/></svg>
<div class="a" style="left:167px;top:400px;width:1179px;height:18px;background:#7b96df"></div>
<div class="t" style="left:171.30px;top:403px;font-size:12px;color:#fff;transform:scaleX(0.7493);transform-origin:0 0;">4</div>
<div class="t" style="left:228.30px;top:403px;font-size:12px;color:#fff;transform:scaleX(0.8702);transform-origin:0 0;">V00010</div>
<div class="t lnk" style="left:312.40px;top:403px;font-size:12px;color:#fff;transform:scaleX(0.9106);transform-origin:0 0;">Cucumber</div>
<div class="a" style="left:538px;top:400px;width:57px;height:18px;background:#fff;border:1px solid;border-color:#8a8a8a #fff #fff #8a8a8a;box-shadow:inset 1px 1px 0 #444"></div>
<div class="t" style="left:575.65px;top:403px;font-size:12px;color:#0000ff;transform:scaleX(0.8242);transform-origin:100% 0;">20</div>
<div class="t" style="left:661.65px;top:403px;font-size:12px;color:#fff;transform:scaleX(0.8564);transform-origin:100% 0;">4.00</div>
<div class="a" style="left:688px;top:400px;width:83px;height:18px;background:#7b96df;border:1px solid;border-color:#8a8a8a #7b96df #7b96df #8a8a8a;box-shadow:inset 1px 1px 0 #444"></div>
<div class="t" style="left:741.65px;top:403px;font-size:12px;color:#fff;transform:scaleX(0.8564);transform-origin:100% 0;">1.20</div>
<div class="t" style="left:828.65px;top:403px;font-size:12px;color:#fff;transform:scaleX(0.8242);transform-origin:100% 0;">70</div>
<div class="t" style="left:955.97px;top:403px;font-size:12px;color:#fff;transform:scaleX(0.8659);transform-origin:100% 0;">56.00</div>
<div class="t" style="left:1070.97px;top:403px;font-size:12px;color:#fff;transform:scaleX(0.8659);transform-origin:100% 0;">24.00</div>
<div class="t" style="left:1166.98px;top:403px;font-size:12px;color:#fff;transform:scaleX(0.8492);transform-origin:100% 0;">800</div>
<div class="a hl" style="left:223px;top:400px;width:1px;height:18px;"></div>
<div class="a hl" style="left:308px;top:400px;width:1px;height:18px;"></div>
<div class="a hl" style="left:537px;top:400px;width:1px;height:18px;"></div>
<div class="a hl" style="left:595px;top:400px;width:1px;height:18px;"></div>
<div class="a hl" style="left:687px;top:400px;width:1px;height:18px;"></div>
<div class="a hl" style="left:771px;top:400px;width:1px;height:18px;"></div>
<div class="a hl" style="left:844px;top:400px;width:1px;height:18px;"></div>
<div class="a hl" style="left:915px;top:400px;width:1px;height:18px;"></div>
<div class="a hl" style="left:988px;top:400px;width:1px;height:18px;"></div>
<div class="a hl" style="left:1103px;top:400px;width:1px;height:18px;"></div>
<div class="a hl" style="left:1189px;top:400px;width:1px;height:18px;"></div>
<div class="a hl" style="left:1232px;top:400px;width:1px;height:18px;"></div>
<div class="a hl" style="left:1275px;top:400px;width:1px;height:18px;"></div>
<div class="a hl" style="left:1310px;top:400px;width:1px;height:18px;"></div>
<div class="a hl" style="left:167px;top:418px;width:1179px;height:1px;"></div>
<svg class="a" style="left:1245.5px;top:403px" width="17" height="12" viewBox="0 0 17 12"><path d="M0.8 5.2 C3 1.8 7.5 0.6 11 1.6 L16 5.8 C14.5 8.5 10.5 11 6.5 10.8 C4 10.3 2 8 0.8 5.2 Z" fill="#fff" stroke="#b4b4b4" stroke-width=".7"/><circle cx="8.2" cy="5.6" r="2.9" fill="#16808a"/><circle cx="8.2" cy="5.4" r="1.2" fill="#06303a"/><path d="M0.6 5.4 C3 2 7.5 0.8 11 1.8 L16.2 6.2" fill="none" stroke="#111" stroke-width="1.4"/><path d="M3.5 8.8 C6 10.6 10.5 10.4 13.5 8" fill="none" stroke="#888" stroke-width=".7"/></svg>
<svg class="a" style="left:1286px;top:401px" width="14" height="16" viewBox="0 0 14 16"><rect x=".75" y=".75" width="12.5" height="14.5" fill="#fff" stroke="#000" stroke-width="1.5"/><path d="M3 3.5 h8 M3 5.5 h8 M3 7.5 h8 M3 9.5 h8 M3 11.5 h8 M3 13.2 h8" stroke="#000" stroke-width="1"/></svg>
<svg class="a" style="left:1323px;top:401px" width="11" height="16" viewBox="0 0 11 16" shape-rendering="crispEdges"><rect x="3" y="0" width="5" height="2" fill="#000"/><rect x="4" y="1" width="3" height="1" fill="#fff"/><rect x="0" y="2" width="11" height="2" fill="#000"/><rect x="1" y="2" width="1" height="1" fill="#fff"/><rect x="9" y="2" width="1" height="1" fill="#fff"/><rect x="2" y="4" width="7" height="12" fill="#000"/><rect x="3" y="4" width="1" height="11" fill="#fff"/><rect x="5" y="4" width="1" height="11" fill="#fff"/><rect x="7" y="4" width="1" height="11" fill="#fff"/><rect x="3" y="4" width="5" height="1" fill="#fff"/><rect x="3" y="14" width="5" height="1" fill="#fff"/></svg>
<div class="a" style="left:167px;top:400px;width:1179px;height:1px;background:repeating-linear-gradient(90deg,#000 0,#000 1px,#fff 1px,#fff 2px)"></div>
<div class="a" style="left:167px;top:417px;width:1179px;height:1px;background:repeating-linear-gradient(90deg,#000 0,#000 1px,#fff 1px,#fff 2px)"></div>
<div class="a" style="left:167px;top:400px;width:1px;height:18px;background:repeating-linear-gradient(180deg,#000 0,#000 1px,#fff 1px,#fff 2px)"></div>
<div class="a" style="left:1345px;top:400px;width:1px;height:18px;background:repeating-linear-gradient(180deg,#000 0,#000 1px,#fff 1px,#fff 2px)"></div>
<div class="a" style="left:1203px;top:325px;width:16px;height:16px;background:#3f7a0c;border:1px solid #0a0a0a"></div>
<div class="t" style="left:1198.17px;top:328px;font-size:11px;color:#fff;font-weight:bold;transform:scaleX(0.5261);transform-origin:50% 0;">BOM</div>
<svg class="a" style="left:1245.5px;top:326px" width="17" height="12" viewBox="0 0 17 12"><path d="M0.8 5.2 C3 1.8 7.5 0.6 11 1.6 L16 5.8 C14.5 8.5 10.5 11 6.5 10.8 C4 10.3 2 8 0.8 5.2 Z" fill="#fff" stroke="#b4b4b4" stroke-width=".7"/><circle cx="8.2" cy="5.6" r="2.9" fill="#16808a"/><circle cx="8.2" cy="5.4" r="1.2" fill="#06303a"/><path d="M0.6 5.4 C3 2 7.5 0.8 11 1.8 L16.2 6.2" fill="none" stroke="#111" stroke-width="1.4"/><path d="M3.5 8.8 C6 10.6 10.5 10.4 13.5 8" fill="none" stroke="#888" stroke-width=".7"/></svg>
<svg class="a" style="left:1286px;top:325px" width="14" height="16" viewBox="0 0 14 16"><rect x=".75" y=".75" width="12.5" height="14.5" fill="#fff" stroke="#000" stroke-width="1.5"/><path d="M3 3.5 h8 M3 5.5 h8 M3 7.5 h8 M3 9.5 h8 M3 11.5 h8 M3 13.2 h8" stroke="#000" stroke-width="1"/></svg>
<svg class="a" style="left:1323px;top:326px" width="11" height="16" viewBox="0 0 11 16" shape-rendering="crispEdges"><rect x="3" y="0" width="5" height="2" fill="#000"/><rect x="4" y="1" width="3" height="1" fill="#fff"/><rect x="0" y="2" width="11" height="2" fill="#000"/><rect x="1" y="2" width="1" height="1" fill="#fff"/><rect x="9" y="2" width="1" height="1" fill="#fff"/><rect x="2" y="4" width="7" height="12" fill="#000"/><rect x="3" y="4" width="1" height="11" fill="#fff"/><rect x="5" y="4" width="1" height="11" fill="#fff"/><rect x="7" y="4" width="1" height="11" fill="#fff"/><rect x="3" y="4" width="5" height="1" fill="#fff"/><rect x="3" y="14" width="5" height="1" fill="#fff"/></svg>
<div class="t" style="left:163.56px;top:616px;font-size:12px;color:#000;transform:scaleX(0.9357);transform-origin:100% 0;">Total Weight:</div>
<div class="t" style="left:241.00px;top:616px;font-size:12px;color:#2f6b6b;transform:scaleX(0.9123);transform-origin:0 0;">442 lbs</div>
<div class="t" style="left:182.02px;top:632px;font-size:12px;color:#000;transform:scaleX(0.9471);transform-origin:100% 0;">Total Qty:</div>
<div class="t" style="left:241.00px;top:632px;font-size:12px;color:#2f6b6b;transform:scaleX(0.8742);transform-origin:0 0;">221</div>
<div class="a sunk" style="left:166px;top:651px;width:85px;height:19px;"></div>
<div class="t" style="left:169.60px;top:655px;font-size:12px;color:#a6abc6;transform:scaleX(0.8691);transform-origin:0 0;">Enter Discount</div>
<div class="a btn" style="left:258px;top:651px;width:23px;height:20px;"></div>
<div class="a btn" style="left:285px;top:651px;width:23px;height:20px;"></div>
<svg class="a" style="left:260px;top:653px" width="19" height="16" viewBox="0 0 19 16"><path d="M6.5 5.5 L3.5 2.2 C2.8 1.2 4.2 0.4 5 1.3 L8 4.5" fill="#fff" stroke="#9a9a9a" stroke-width=".8"/><path d="M5.5 5.5 L11 3 L17 10 L11.5 15 L5 8.5 Z" fill="#d41818"/><path d="M5.5 5.5 L11 3 L13 5.3 L7 8 Z" fill="#a80c0c"/><path d="M8.5 10 L11 12.8 L15.5 5.5" fill="none" stroke="#14148c" stroke-width="1.8"/></svg>
<svg class="a" style="left:287px;top:653px" width="19" height="16" viewBox="0 0 19 16"><path d="M6.5 5.5 L3.5 2.2 C2.8 1.2 4.2 0.4 5 1.3 L8 4.5" fill="#fff" stroke="#9a9a9a" stroke-width=".8"/><path d="M5.5 5.5 L11 3 L17 10 L11.5 15 L5 8.5 Z" fill="#d41818"/><path d="M5.5 5.5 L11 3 L13 5.3 L7 8 Z" fill="#a80c0c"/><path d="M8.5 8 L14 13.5 M14 8 L8.5 13.5" stroke="#14148c" stroke-width="2"/></svg>
<div class="t" style="left:859.50px;top:617px;font-size:11px;color:#000;transform:scaleX(0.8179);transform-origin:0 0;">%</div>
<div class="a sunk" style="left:876px;top:612px;width:39px;height:19px;"></div>
<div class="t" style="left:889.35px;top:616px;font-size:12px;color:#000;transform:scaleX(0.8778);transform-origin:100% 0;">0.00</div>
<div class="a btn" style="left:916px;top:610px;width:23px;height:20px;"></div>
<svg class="a" style="left:922px;top:613px" shape-rendering="crispEdges" width="12" height="14" viewBox="0 0 12 14"><rect x=".5" y=".5" width="11" height="13" fill="#f4f4fa" stroke="#aaa" stroke-width="1"/><rect x="1" y="1" width="10" height="3" fill="#2ecc40"/><path d="M3.5 5.5 V12.5 M5.5 5.5 V12.5 M7.5 5.5 V12.5 M9.5 5.5 V12.5" stroke="#8a8ad6" stroke-width="1"/></svg>
<div class="t" style="left:955.42px;top:618px;font-size:11px;color:#111;transform:scaleX(0.9426);transform-origin:100% 0;">Shipping $</div>
<div class="a sunk" style="left:1010px;top:612px;width:47px;height:19px;"></div>
<div class="t" style="left:1031.15px;top:616px;font-size:12px;color:#000;transform:scaleX(0.8778);transform-origin:100% 0;">0.00</div>
<div class="t" style="left:1073.40px;top:618px;font-size:11px;color:#111;transform:scaleX(0.9440);transform-origin:100% 0;">Adjustment $</div>
<div class="a sunk" style="left:1140px;top:612px;width:63px;height:19px;"></div>
<div class="t" style="left:1177.65px;top:616px;font-size:12px;color:#000;transform:scaleX(0.8778);transform-origin:100% 0;">0.00</div>
<div class="t" style="left:977.45px;top:643px;font-size:11px;color:#111;transform:scaleX(0.9348);transform-origin:100% 0;">Tax %</div>
<div class="a sunk" style="left:1010px;top:637px;width:64px;height:20px;"></div>
<div class="a btn dd" style="left:1056px;top:639px;width:17px;height:17px;"></div>
<div class="t" style="left:1014.40px;top:642px;font-size:12px;color:#000;transform:scaleX(0.9498);transform-origin:0 0;">N/A</div>
<div class="t" style="left:1111.71px;top:643px;font-size:11px;color:#111;transform:scaleX(0.9319);transform-origin:100% 0;">Tax $</div>
<div class="a sunk dis" style="left:1140px;top:637px;width:63px;height:19px;"></div>
<div class="t" style="left:1177.65px;top:641px;font-size:12px;color:#000;transform:scaleX(0.8778);transform-origin:100% 0;">0.00</div>
<div class="t" style="left:1210.57px;top:618px;font-size:11px;color:#111;transform:scaleX(0.9702);transform-origin:100% 0;">Sub Total $</div>
<div class="a sunk dis" style="left:1268px;top:612px;width:79px;height:19px;"></div>
<div class="t" style="left:1308.30px;top:616px;font-size:12px;color:#000;transform:scaleX(0.8856);transform-origin:100% 0;">265.20</div>
<div class="t" style="left:1216.73px;top:641px;font-size:12px;color:#2f6b6b;font-weight:bold;transform:scaleX(0.9575);transform-origin:100% 0;">TOTAL $</div>
<div class="a sunk dis" style="left:1268px;top:636px;width:79px;height:19px;"></div>
<div class="t" style="left:1307.00px;top:640px;font-size:12px;color:#2f6b6b;font-weight:bold;letter-spacing:0.217px;">265.20</div>
<div class="t" style="left:1197.93px;top:664px;font-size:12px;color:#2f6b6b;font-weight:bold;transform:scaleX(0.8999);transform-origin:100% 0;">BALANCE $</div>
<div class="a sunk dis" style="left:1268px;top:657px;width:79px;height:19px;"></div>
<div class="t" style="left:1307.00px;top:661px;font-size:12px;color:#2f6b6b;font-weight:bold;letter-spacing:0.217px;">265.20</div>
<div class="a btn" style="left:1062px;top:685px;width:40px;height:23px;"></div>
<div class="t" style="left:1068.92px;top:690px;font-size:12px;color:#000;transform:scaleX(0.9141);transform-origin:50% 0;">Save</div>
<div class="a btn" style="left:1106px;top:685px;width:111px;height:23px;"></div>
<svg class="a" style="left:1111px;top:688px" width="16" height="17" viewBox="0 0 16 17"><rect x=".75" y=".75" width="10.5" height="12.5" fill="#fff" stroke="#666" stroke-width="1.3"/><path d="M2.5 3.5 h7 M2.5 5.5 h7 M2.5 7.5 h7 M2.5 9.5 h7 M2.5 11.3 h7" stroke="#555" stroke-width="1"/><path d="M12.5 11.5 V15 H9" fill="none" stroke="#9a9a9a" stroke-width="1.3"/><path d="M6.5 15 L9.5 13 V17 Z" fill="#9a9a9a"/></svg>
<div class="t" style="left:1125.70px;top:690px;font-size:11px;color:#ababab;font-weight:bold;transform:scaleX(1.0579);transform-origin:0 0;">PLACE ORDER</div>
<div class="a btn" style="left:1221px;top:685px;width:80px;height:23px;"></div>
<div class="t" style="left:1225.32px;top:690px;font-size:12px;color:#000;transform:scaleX(0.9249);transform-origin:50% 0;">Cancel Order</div>
<div class="a btn" style="left:1305px;top:685px;width:48px;height:23px;"></div>
<div class="t" style="left:1313.66px;top:690px;font-size:12px;color:#000;transform:scaleX(0.9453);transform-origin:50% 0;">Close</div>
<div class="a btn" style="left:157px;top:685px;width:23px;height:23px;"></div>
<div class="a btn" style="left:181px;top:685px;width:23px;height:23px;"></div>
<div class="a btn" style="left:205px;top:685px;width:23px;height:23px;"></div>
<div class="a btn" style="left:229px;top:685px;width:23px;height:23px;"></div>
<div class="a btn" style="left:253px;top:685px;width:23px;height:23px;background:#e8e6da"></div>
<div class="a btn" style="left:277px;top:685px;width:23px;height:23px;"></div>
<div class="a btn" style="left:301px;top:685px;width:23px;height:23px;"></div>
<div class="a" style="left:325px;top:684px;width:27px;height:27px;background:#f0f0f0;border:3px solid #fa0a0a;border-radius:3px"></div>
<div class="a btn" style="left:328px;top:687px;width:21px;height:21px;background:#e4e4e4"></div>
<svg class="a" style="left:159px;top:689px" width="18" height="16" viewBox="0 0 18 16"><path d="M5.5 8 V2.5 H9 L12.5 6 V8" fill="#f4f4f4" stroke="#555" stroke-width="1"/><path d="M6.5 5.5 h4" stroke="#aaa" stroke-width="1"/><rect x="4.5" y="7.5" width="11" height="5.5" fill="#ededed" stroke="#505050" stroke-width="1.2"/><path d="M5.5 10.5 h9" stroke="#a0a0a0" stroke-width="1"/></svg>
<svg class="a" style="left:183px;top:689px" width="18" height="16" viewBox="0 0 18 16"><rect x="2.5" y="2.5" width="15" height="11" fill="#d8d8d8" stroke="#c0c0c0" stroke-width="1"/><path d="M4.5 7.5 h8 M4.5 9.5 h8" stroke="#b0b0b0" stroke-width="1"/><rect x="13.5" y="4" width="2.5" height="2.5" fill="#b4b4b4"/></svg>
<svg class="a" style="left:207px;top:689px" width="18" height="16" viewBox="0 0 18 16"><path d="M14.5 0.5 L16 1.5 L10.5 9.5 L8.5 8.5 Z" fill="#cfcfcf" stroke="#c4c4c4" stroke-width=".8"/><path d="M3 11.5 L9 8 L15.5 9.5 L9 14 Z" fill="#dedede" stroke="#c8c8c8" stroke-width="1"/></svg>
<svg class="a" style="left:231px;top:689px" width="18" height="16" viewBox="0 0 18 16"><path d="M5.5 8 V2.5 H9 L12.5 6 V8" fill="#f4f4f4" stroke="#555" stroke-width="1"/><path d="M6.5 5.5 h4" stroke="#aaa" stroke-width="1"/><rect x="4.5" y="7.5" width="11" height="5.5" fill="#ededed" stroke="#505050" stroke-width="1.2"/><path d="M5.5 10.5 h9" stroke="#a0a0a0" stroke-width="1"/><path d="M14.5 1.5 L10.5 7" stroke="#666" stroke-width="1.4"/><path d="M9 3 L11 7" stroke="#888" stroke-width="1"/></svg>
<svg class="a" style="left:255px;top:689px" width="18" height="16" viewBox="0 0 18 16"><rect x="3" y="0.5" width="12" height="12" fill="#0000f0" stroke="#000" stroke-width="1.2"/><path d="M3 12.8 h12.6 V0.5" stroke="#fff" stroke-width="1" fill="none"/><path d="M5.5 6.5 L8 9.5 L13 3.5" fill="none" stroke="#fff" stroke-width="2"/></svg>
<svg class="a" style="left:279px;top:689px" width="18" height="16" viewBox="0 0 18 16"><path d="M3.5 0.8 H8.5 L11.5 3.8 V9.5 H3.5 Z" fill="#fff" stroke="#000" stroke-width="1.3"/><path d="M6.5 4.8 H11.5 L14.5 7.8 V14.5 H6.5 Z" fill="#fff" stroke="#000" stroke-width="1.3"/><path d="M8 9 h5 M8 11 h5 M8 13 h5" stroke="#000" stroke-width="0.8"/></svg>
<svg class="a" style="left:303px;top:689px" width="18" height="16" viewBox="0 0 18 16"><path d="M2 6 C5 6.5 10 3 14.5 0.8 L16.5 8.5 C12 9 8 11 4.5 13.2 Z" fill="#aeaeae" stroke="#a0a0a0" stroke-width=".8"/><path d="M5 8 L13 4.5 M6 10.5 L14 7" stroke="#c8c8c8" stroke-width="1"/></svg>
<svg class="a" style="left:330px;top:689px" width="17" height="17" viewBox="0 0 17 17"><rect x="0" y="9.5" width="17" height="6" fill="#b8b8b8"/><rect x="5" y="11" width="7" height="4.5" fill="#fff"/><rect x="8.2" y="12" width="1.6" height="3.5" fill="#222"/><rect x="6.5" y="12.5" width="1" height="3" fill="#888"/><path d="M0 16 h17" stroke="#111" stroke-width="1.4"/><path d="M16.5 1 V16" stroke="#555" stroke-width="1"/></svg>
<div class="t" style="left:333.73px;top:688px;font-size:12px;color:#a50040;font-weight:bold;-webkit-text-stroke:0.5px #a50040;">Q</div>
<div class="a sunk" style="left:157px;top:712px;width:13px;height:13px;"></div>
<div class="t" style="left:175.40px;top:713px;font-size:12px;color:#000;transform:scaleX(0.9136);transform-origin:0 0;">Print Queue</div>
<div class="a sunk" style="left:237px;top:712px;width:13px;height:13px;"></div>
<div class="t" style="left:255.50px;top:713px;font-size:12px;color:#000;transform:scaleX(0.9390);transform-origin:0 0;">Invoice Only</div>
<div class="a sunk" style="left:319px;top:712px;width:13px;height:13px;"></div>
<div class="a" style="left:334px;top:714px;width:103px;height:19px;background:#ffffe1;border:1px solid #767676"></div>
<div class="t" style="left:337.50px;top:718px;font-size:12px;color:#000;transform:scaleX(0.9623);transform-origin:0 0;">Save as Quotation</div>
<div class="a" style="left:400px;top:618px;width:225px;height:27px;background:#fff;border:3px solid #fa0a0a"></div>
<div class="t" style="left:410.50px;top:624px;font-size:14px;color:#f01414;transform:scaleX(1.0191);transform-origin:0 0;">Click Here to Save as Quotation</div>
<svg class="a" style="left:340px;top:630px" width="80" height="60" viewBox="0 0 80 60"><path d="M61 11 L25 43" stroke="#fa0a0a" stroke-width="2.6"/><path d="M16 51 L23 36.5 L33 47 Z" fill="#fa0a0a"/></svg>
</body>
</html>
